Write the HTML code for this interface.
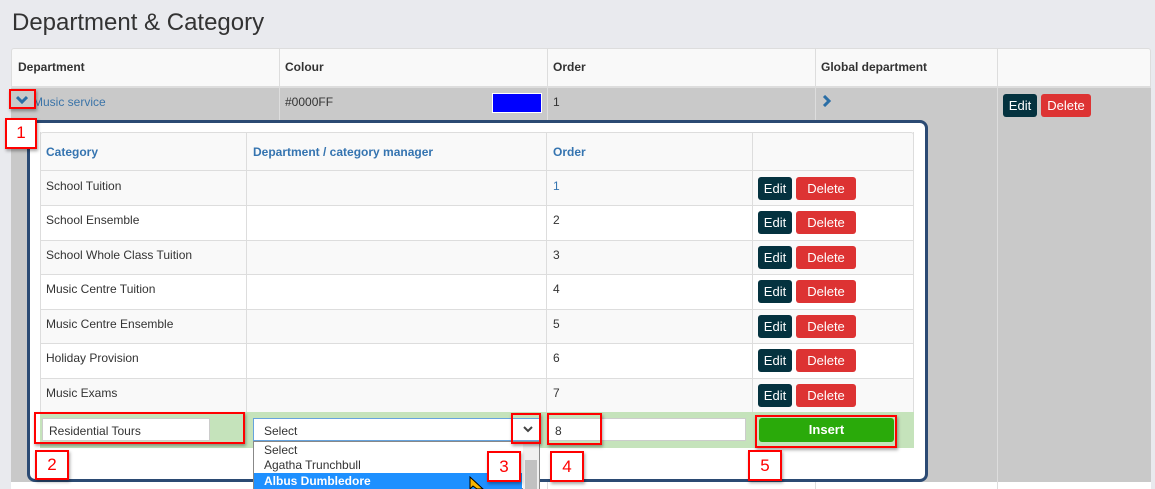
<!DOCTYPE html>
<html><head><style>
*{box-sizing:border-box;margin:0;padding:0}
body{width:1155px;height:489px;background:#e9eaee;font-family:"Liberation Sans",sans-serif;font-size:12px;color:#333;position:relative;overflow:hidden}
.a{position:absolute}
.red{position:absolute;border:2px solid #f00;box-shadow:1px 2px 3px rgba(0,0,0,.35)}
.num{position:absolute;border:2px solid #f00;background:#fff;color:#f00;font-size:17px;text-align:center;box-shadow:1px 2px 3px rgba(0,0,0,.35)}
.edit{position:absolute;background:#04323f;color:#fff;border-radius:3px;font-size:13px;text-align:center;height:23px;line-height:23px}
.del{position:absolute;background:#dd3333;color:#fff;border-radius:3px;font-size:13px;text-align:center;height:23px;line-height:23px}
.vl{position:absolute;width:1px;background:#ddd}
.hl{position:absolute;height:1px;background:#ddd}
</style></head><body>
<div class="a" style="left:12px;top:9px;font-size:24px;color:#333">Department &amp; Category</div>
<div class="a" style="left:11px;top:48px;width:1140px;height:40px;background:#f9f9f9;border:1px solid #ddd;border-bottom:2px solid #ddd;border-radius:3px 3px 0 0"></div>
<div class="a" style="left:18px;top:60px;font-weight:bold">Department</div>
<div class="a" style="left:285px;top:60px;font-weight:bold">Colour</div>
<div class="a" style="left:553px;top:60px;font-weight:bold">Order</div>
<div class="a" style="left:821px;top:60px;font-weight:bold">Global department</div>
<div class="a" style="left:11px;top:88px;width:1140px;height:394px;background:#c9c9c9"></div>
<div class="a" style="left:11px;top:482px;width:1140px;height:7px;background:#fff"></div>
<div class="vl" style="left:279px;top:48px;height:441px"></div>
<div class="vl" style="left:547px;top:48px;height:441px"></div>
<div class="vl" style="left:815px;top:48px;height:441px"></div>
<div class="vl" style="left:997px;top:48px;height:441px"></div>
<svg class="a" style="left:16px;top:95px" width="12" height="10"><path d="M1 2 L6 7 L11 2" stroke="#2a6ea6" stroke-width="3" fill="none"/></svg>
<div class="a" style="left:33px;top:95px;color:#3b74a8">Music service</div>
<div class="a" style="left:285px;top:95px">#0000FF</div>
<div class="a" style="left:492px;top:93px;width:50px;height:20px;background:#0000ff;border:1px solid #fff"></div>
<div class="a" style="left:553px;top:95px">1</div>
<svg class="a" style="left:822px;top:95px" width="10" height="12"><path d="M2 1 L7 6 L2 11" stroke="#2a6ea6" stroke-width="3" fill="none"/></svg>
<div class="edit" style="left:1003px;top:94px;width:34px">Edit</div>
<div class="del" style="left:1041px;top:94px;width:50px">Delete</div>

<div class="a" style="left:27px;top:120px;width:901px;height:362px;background:#fff;border:3px solid #2b4a73;border-radius:8px"></div>
<div class="a" style="left:40px;top:132px;width:874px;height:40px;background:#f9f9f9;border:1px solid #ddd;border-bottom:2px solid #ddd;border-radius:3px 3px 0 0"></div>
<div class="a" style="left:46px;top:145px;font-weight:bold;color:#3574b0">Category</div>
<div class="a" style="left:253px;top:145px;font-weight:bold;color:#3574b0">Department / category manager</div>
<div class="a" style="left:553px;top:145px;font-weight:bold;color:#3574b0">Order</div>

<div class="a" style="left:40px;top:171px;width:874px;height:34px;background:#f9f9f9"></div>
<div class="a" style="left:40px;top:240px;width:874px;height:34px;background:#f9f9f9"></div>
<div class="a" style="left:40px;top:309px;width:874px;height:34px;background:#f9f9f9"></div>
<div class="a" style="left:40px;top:378px;width:874px;height:34px;background:#f9f9f9"></div>
<div class="hl" style="left:40px;top:205px;width:874px"></div>
<div class="hl" style="left:40px;top:240px;width:874px"></div>
<div class="hl" style="left:40px;top:274px;width:874px"></div>
<div class="hl" style="left:40px;top:309px;width:874px"></div>
<div class="hl" style="left:40px;top:343px;width:874px"></div>
<div class="hl" style="left:40px;top:378px;width:874px"></div>
<div class="hl" style="left:40px;top:412px;width:874px"></div>
<div class="vl" style="left:40px;top:132px;height:280px"></div>
<div class="vl" style="left:913px;top:132px;height:280px"></div>
<div class="vl" style="left:246px;top:132px;height:280px"></div>
<div class="vl" style="left:546px;top:132px;height:280px"></div>
<div class="vl" style="left:752px;top:132px;height:280px"></div>

<div class="a" style="left:46px;top:179px">School Tuition</div>
<div class="a" style="left:46px;top:213px">School Ensemble</div>
<div class="a" style="left:46px;top:248px">School Whole Class Tuition</div>
<div class="a" style="left:46px;top:282px">Music Centre Tuition</div>
<div class="a" style="left:46px;top:317px">Music Centre Ensemble</div>
<div class="a" style="left:46px;top:351px">Holiday Provision</div>
<div class="a" style="left:46px;top:386px">Music Exams</div>
<div class="a" style="left:553px;top:179px;color:#3574b0">1</div>
<div class="a" style="left:553px;top:213px">2</div>
<div class="a" style="left:553px;top:248px">3</div>
<div class="a" style="left:553px;top:282px">4</div>
<div class="a" style="left:553px;top:317px">5</div>
<div class="a" style="left:553px;top:351px">6</div>
<div class="a" style="left:553px;top:386px">7</div>

<div class="edit" style="left:758px;top:177px;width:34px">Edit</div><div class="del" style="left:796px;top:177px;width:60px">Delete</div>
<div class="edit" style="left:758px;top:211px;width:34px">Edit</div><div class="del" style="left:796px;top:211px;width:60px">Delete</div>
<div class="edit" style="left:758px;top:246px;width:34px">Edit</div><div class="del" style="left:796px;top:246px;width:60px">Delete</div>
<div class="edit" style="left:758px;top:280px;width:34px">Edit</div><div class="del" style="left:796px;top:280px;width:60px">Delete</div>
<div class="edit" style="left:758px;top:315px;width:34px">Edit</div><div class="del" style="left:796px;top:315px;width:60px">Delete</div>
<div class="edit" style="left:758px;top:349px;width:34px">Edit</div><div class="del" style="left:796px;top:349px;width:60px">Delete</div>
<div class="edit" style="left:758px;top:384px;width:34px">Edit</div><div class="del" style="left:796px;top:384px;width:60px">Delete</div>

<div class="a" style="left:40px;top:412px;width:874px;height:36px;background:#c5e3bb"></div>
<div class="a" style="left:42px;top:418px;width:168px;height:23px;background:#fff;border:1px solid #ccc;padding:5px 6px 0">Residential Tours</div>
<div class="a" style="left:253px;top:418px;width:287px;height:23px;background:#fff;border:1px solid #66a3dd;padding:5px 10px 0">Select</div>
<svg class="a" style="left:523px;top:425px" width="10" height="8"><path d="M1 2 L5 6 L9 2" stroke="#444" stroke-width="2" fill="none"/></svg>
<div class="a" style="left:548px;top:418px;width:198px;height:23px;background:#fff;border:1px solid #ccc;padding:5px 6px 0">8</div>
<div class="a" style="left:759px;top:418px;width:135px;height:24px;background:#2aaa0a;border-radius:3px;color:#fff;font-size:13px;font-weight:bold;text-align:center;line-height:24px">Insert</div>

<div class="a" style="left:253px;top:441px;width:287px;height:48px;background:#fff;border:1px solid #888"></div>
<div class="a" style="left:264px;top:443px">Select</div>
<div class="a" style="left:264px;top:458px">Agatha Trunchbull</div>
<div class="a" style="left:254px;top:473px;width:268px;height:16px;background:#1e90ff;color:#fff;padding:1px 10px;font-weight:bold">Albus Dumbledore</div>
<div class="a" style="left:523px;top:442px;width:16px;height:47px;background:#f0f0f0"></div>
<div class="a" style="left:525px;top:460px;width:12px;height:29px;background:#c1c1c1"></div>
<svg class="a" style="left:469px;top:476px" width="16" height="13"><path d="M1 1 L1 13 L4 10 L8 13 L14 13 Z" fill="#f7b500" stroke="#000"/></svg>

<div class="red" style="left:9px;top:89px;width:27px;height:20px"></div>
<div class="num" style="left:5px;top:118px;width:32px;height:31px;line-height:26px">1</div>
<div class="red" style="left:34px;top:412px;width:211px;height:32px"></div>
<div class="num" style="left:35px;top:450px;width:34px;height:30px;line-height:26px">2</div>
<div class="red" style="left:511px;top:413px;width:30px;height:31px"></div>
<div class="num" style="left:487px;top:451px;width:34px;height:31px;line-height:27px">3</div>
<div class="red" style="left:547px;top:413px;width:55px;height:32px"></div>
<div class="num" style="left:550px;top:451px;width:34px;height:31px;line-height:27px">4</div>
<div class="red" style="left:755px;top:415px;width:142px;height:33px"></div>
<div class="num" style="left:748px;top:450px;width:34px;height:31px;line-height:27px">5</div>
</body></html>
